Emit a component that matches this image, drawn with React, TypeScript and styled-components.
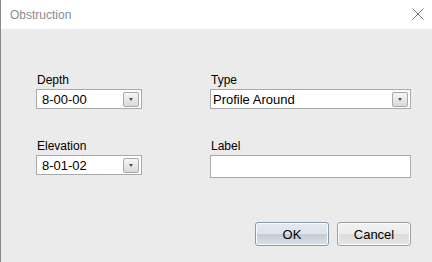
import styled, { createGlobalStyle } from 'styled-components'

const GlobalStyle = createGlobalStyle`
  html, body { margin: 0; padding: 0; background: #ebebeb; }
  body { font-family: "Segoe UI", "Liberation Sans", Arial, sans-serif; }
`

const Window = styled.div`
  width: 432px;
  height: 262px;
  box-sizing: border-box;
  border-left: 1px solid #8a8a8a;
  background: #ebebeb;
  display: flex;
  flex-direction: column;
  overflow: hidden;
`

const TitleBar = styled.div`
  height: 29px;
  background: #ffffff;
  display: flex;
  align-items: center;
  justify-content: space-between;
  padding: 0 8px 0 9px;
  flex-shrink: 0;
`

const Title = styled.span`
  font-size: 12px;
  color: #8c8c8c;
`

const CloseIcon = styled.svg`
  width: 12px;
  height: 12px;
  margin-top: -1px;
`

const Body = styled.div`
  flex: 1;
  display: flex;
  flex-direction: column;
  padding: 44px 21px 0 35px;
`

const FormGrid = styled.div`
  display: grid;
  grid-template-columns: 106px 201px;
  column-gap: 68px;
  row-gap: 30px;
`

const Field = styled.div`
  display: flex;
  flex-direction: column;
  gap: 2px;
`

const FieldLabel = styled.label`
  font-size: 12px;
  color: #000;
  line-height: 14px;
  padding-left: 1px;
`

const InputBox = styled.div<{ $tall?: boolean; $inset?: number }>`
  height: ${(p) => (p.$tall ? 23 : 20)}px;
  box-sizing: border-box;
  background: #fff;
  border: 1px solid #aaaaaa;
  display: flex;
  align-items: center;
  padding: 0 2px 0 ${(p) => p.$inset ?? 5}px;
  font-size: 13px;
  color: #000;
`

const Value = styled.span`
  flex: 1;
`

const DropButton = styled.div`
  width: 16px;
  height: 15px;
  box-sizing: border-box;
  border: 1px solid #a8a8a8;
  border-radius: 2px;
  background: linear-gradient(#f6f6f6, #dadada);
  display: flex;
  align-items: center;
  justify-content: center;
`

const Arrow = styled.span`
  width: 0;
  height: 0;
  border-left: 2.5px solid transparent;
  border-right: 2.5px solid transparent;
  border-top: 3px solid #505050;
`

const Buttons = styled.div`
  display: flex;
  justify-content: flex-end;
  gap: 8px;
  margin-top: 44px;
`

const Button = styled.button<{ $primary?: boolean }>`
  width: 74px;
  height: 24px;
  box-sizing: border-box;
  border: 1px solid ${(p) => (p.$primary ? '#8a9aac' : '#a0a0a0')};
  border-radius: 3px;
  background: ${(p) =>
    p.$primary
      ? 'linear-gradient(#e3e9f1 0%, #dde4ec 50%, #c4ccd6 51%, #d8dfe7 100%)'
      : 'linear-gradient(#f2f2f2 0%, #ececec 50%, #dcdcdc 51%, #e6e6e6 100%)'};
  box-shadow: inset 0 0 0 1px #fafbfc;
  font-family: inherit;
  font-size: 13px;
  color: #000;
  padding: 0;
`

const Combo = ({ value, inset }: { value: string; inset?: number }) => (
  <InputBox $inset={inset}>
    <Value>{value}</Value>
    <DropButton>
      <Arrow />
    </DropButton>
  </InputBox>
)

export default function App() {
  return (
    <>
      <GlobalStyle />
      <Window>
        <TitleBar>
          <Title>Obstruction</Title>
          <CloseIcon viewBox="0 0 12 12">
            <path d="M0.5 0.5 L11.5 11.5 M11.5 0.5 L0.5 11.5" stroke="#7a7a7a" strokeWidth="1" fill="none" />
          </CloseIcon>
        </TitleBar>
        <Body>
          <FormGrid>
            <Field>
              <FieldLabel>Depth</FieldLabel>
              <Combo value="8-00-00" />
            </Field>
            <Field>
              <FieldLabel>Type</FieldLabel>
              <Combo value="Profile Around" inset={2} />
            </Field>
            <Field>
              <FieldLabel>Elevation</FieldLabel>
              <Combo value="8-01-02" />
            </Field>
            <Field>
              <FieldLabel>Label</FieldLabel>
              <InputBox $tall />
            </Field>
          </FormGrid>
          <Buttons>
            <Button $primary>OK</Button>
            <Button>Cancel</Button>
          </Buttons>
        </Body>
      </Window>
    </>
  )
}
